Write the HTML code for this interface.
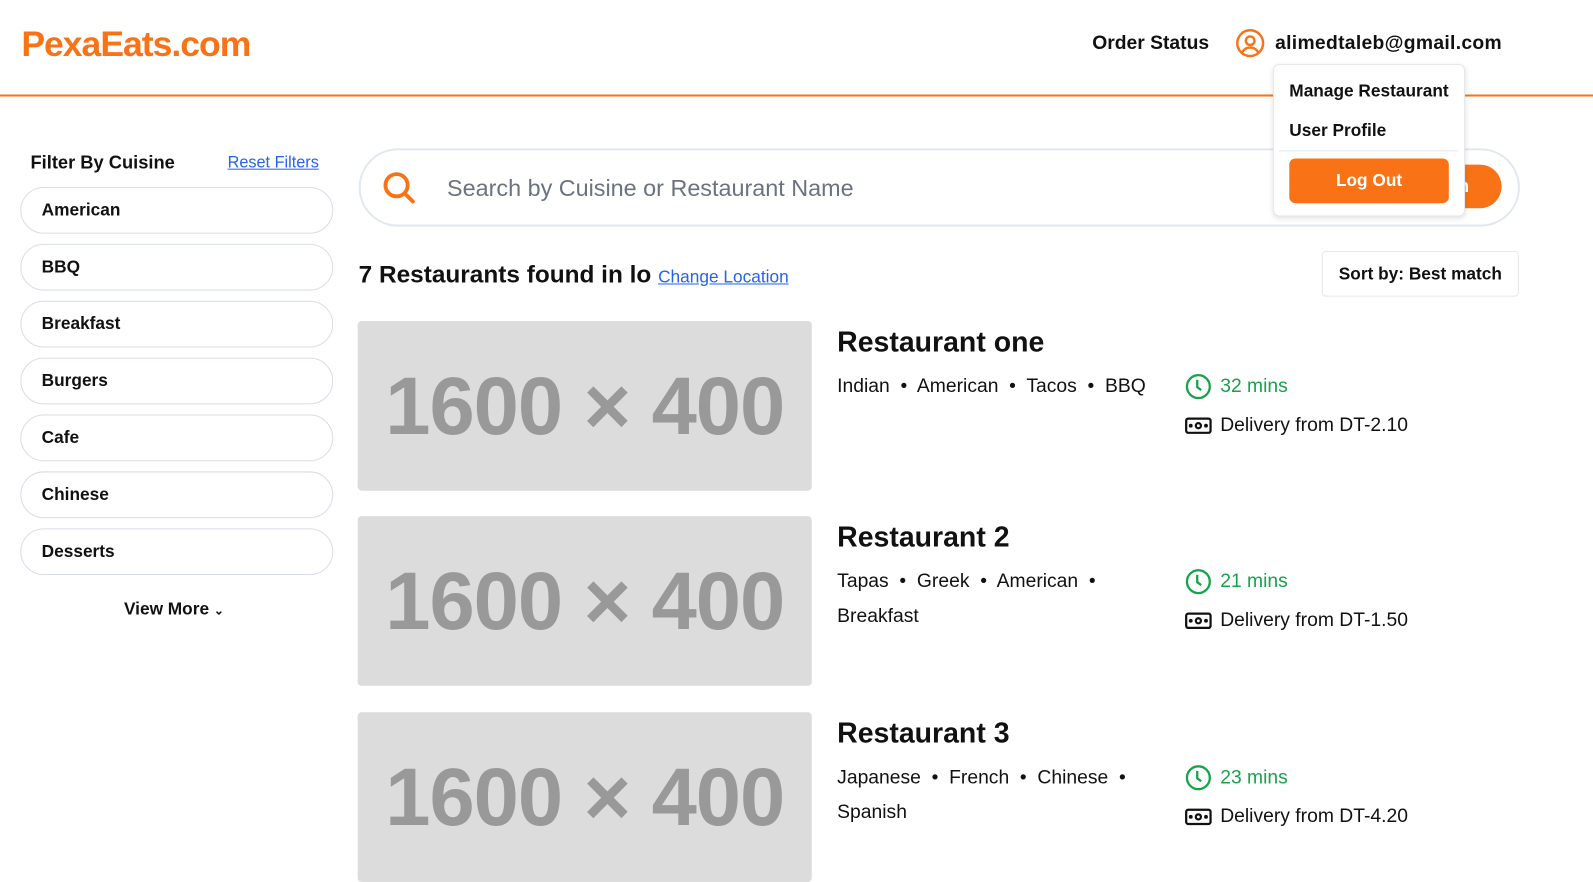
<!DOCTYPE html><html><head><style>
body{margin:0;width:1593px;height:839px;overflow:hidden;font-family:"Liberation Sans",sans-serif;background:#fff;color:#111;position:relative}
#w{position:absolute;left:0;top:0;width:1568px;height:826px;transform:scale(1.016);transform-origin:0 0}
.a{position:absolute}
.pill{position:absolute;left:20px;width:306px;height:44px;border:1px solid #d8dde6;border-radius:24px;font-size:17px;font-weight:600;line-height:44px}
.pill span{margin-left:20px}
.img{position:absolute;left:352px;width:447px;height:167px;background:#dcdcdc;border-radius:4px;overflow:hidden;color:#999;font-size:80px;font-weight:bold;text-align:center;line-height:167px;letter-spacing:-1px}
.t{position:absolute;left:824px;font-size:28px;font-weight:bold}
.c{position:absolute;left:824px;font-size:19px;width:320px;line-height:34px}
.m{position:absolute;left:1166px;font-size:19px;display:flex;align-items:center;gap:8px}
</style></head><body><div id="w">
<div class="a" style="left:21px;top:24px;font-size:35px;font-weight:bold;color:#f97316;letter-spacing:-1px">PexaEats.com</div>
<div class="a" style="left:1075px;top:32px;font-size:19px;font-weight:bold">Order Status</div>
<svg class="a" style="left:1216px;top:28px" width="29" height="29" viewBox="0 0 24 24" fill="none" stroke="#f97316" stroke-width="2"><circle cx="12" cy="12" r="10.5"/><circle cx="12" cy="10" r="3.5"/><path d="M5.5 19.5c1.5-3 4-4 6.5-4s5 1 6.5 4"/></svg>
<div class="a" style="left:1255px;top:32px;font-size:19px;font-weight:bold;letter-spacing:.3px">alimedtaleb@gmail.com</div>
<div class="a" style="left:0;top:93px;width:1568px;height:2px;background:#f97316"></div>
<div class="a" style="left:30px;top:150px;font-size:18px;font-weight:600">Filter By Cuisine</div>
<div class="a" style="left:224px;top:152px;font-size:16px;color:#2563eb;text-decoration:underline">Reset Filters</div>
<div class="pill" style="top:184px"><span>American</span></div>
<div class="pill" style="top:240px"><span>BBQ</span></div>
<div class="pill" style="top:296px"><span>Breakfast</span></div>
<div class="pill" style="top:352px"><span>Burgers</span></div>
<div class="pill" style="top:408px"><span>Cafe</span></div>
<div class="pill" style="top:464px"><span>Chinese</span></div>
<div class="pill" style="top:520px"><span>Desserts</span></div>
<div class="a" style="left:122px;top:590px;font-size:17px;font-weight:600">View More <span style="font-size:12px">&#8964;</span></div>
<div class="a" style="left:353px;top:146px;width:1139px;height:73px;border:2px solid #e2e8f0;border-radius:40px"></div>
<svg class="a" style="left:375px;top:167px" width="35" height="35" viewBox="0 0 24 24" fill="none" stroke="#f97316" stroke-width="2.6" stroke-linecap="round"><circle cx="10.5" cy="10.5" r="7.5"/><path d="M16 16l5.5 5.5"/></svg>
<div class="a" style="left:440px;top:172px;font-size:23px;color:#6b7280">Search by Cuisine or Restaurant Name</div>
<div class="a" style="left:1380px;top:162px;width:98px;height:43px;background:#f97316;border-radius:22px;color:#fff;font-size:18px;font-weight:bold;line-height:43px;text-align:right"><span style="margin-right:32px">ch</span></div>
<div class="a" style="left:1253px;top:63px;width:187px;height:148px;background:#fff;border:1px solid #e5e7eb;border-radius:6px;box-shadow:0 2px 6px rgba(0,0,0,.12)">
<div class="a" style="left:15px;top:16px;font-size:17px;font-weight:600">Manage Restaurant</div>
<div class="a" style="left:15px;top:55px;font-size:17px;font-weight:600">User Profile</div>
<div class="a" style="left:5px;top:84px;width:176px;height:1px;background:#e5e7eb"></div>
<div class="a" style="left:15px;top:92px;width:157px;height:44px;background:#f97316;border-radius:6px;color:#fff;font-size:17px;font-weight:bold;text-align:center;line-height:44px">Log Out</div>
</div>
<div class="a" style="left:353px;top:257px;font-size:24px;font-weight:bold">7 Restaurants found in lo <span style="font-size:17px;font-weight:normal;color:#2563eb;text-decoration:underline">Change Location</span></div>
<div class="a" style="left:1301px;top:247px;width:192px;height:43px;border:1px solid #e5e7eb;border-radius:4px;font-size:17px;font-weight:600;line-height:43px;text-align:center">Sort by: Best match</div>

<div class="img" style="top:316px">1600 × 400</div>
<div class="t" style="top:321px">Restaurant one</div>
<div class="c" style="top:364px">Indian &nbsp;•&nbsp; American &nbsp;•&nbsp; Tacos &nbsp;•&nbsp; BBQ</div>
<div class="img" style="top:508px">1600 × 400</div>
<div class="t" style="top:513px">Restaurant 2</div>
<div class="c" style="top:556px">Tapas &nbsp;•&nbsp; Greek &nbsp;•&nbsp; American &nbsp;•<br>Breakfast</div>
<div class="img" style="top:701px">1600 × 400</div>
<div class="t" style="top:706px">Restaurant 3</div>
<div class="c" style="top:749px">Japanese &nbsp;•&nbsp; French &nbsp;•&nbsp; Chinese &nbsp;•<br>Spanish</div>

<div class="m" style="top:367px;color:#16a34a"><svg width="27" height="27" viewBox="0 0 24 24" fill="none" stroke="#16a34a" stroke-width="2"><circle cx="12" cy="12" r="10"/><path d="M11 6v6.5l3.5 2.5"/></svg>32 mins</div>
<div class="m" style="top:408px"><svg width="27" height="20" viewBox="0 0 27 20" fill="none" stroke="#111" stroke-width="2.2"><rect x="1.5" y="3" width="24" height="14" rx="2"/><circle cx="13.5" cy="10" r="2.5"/><circle cx="6" cy="10" r=".8" fill="#111"/><circle cx="21" cy="10" r=".8" fill="#111"/></svg>Delivery from DT-2.10</div>
<div class="m" style="top:559px;color:#16a34a"><svg width="27" height="27" viewBox="0 0 24 24" fill="none" stroke="#16a34a" stroke-width="2"><circle cx="12" cy="12" r="10"/><path d="M11 6v6.5l3.5 2.5"/></svg>21 mins</div>
<div class="m" style="top:600px"><svg width="27" height="20" viewBox="0 0 27 20" fill="none" stroke="#111" stroke-width="2.2"><rect x="1.5" y="3" width="24" height="14" rx="2"/><circle cx="13.5" cy="10" r="2.5"/><circle cx="6" cy="10" r=".8" fill="#111"/><circle cx="21" cy="10" r=".8" fill="#111"/></svg>Delivery from DT-1.50</div>
<div class="m" style="top:752px;color:#16a34a"><svg width="27" height="27" viewBox="0 0 24 24" fill="none" stroke="#16a34a" stroke-width="2"><circle cx="12" cy="12" r="10"/><path d="M11 6v6.5l3.5 2.5"/></svg>23 mins</div>
<div class="m" style="top:793px"><svg width="27" height="20" viewBox="0 0 27 20" fill="none" stroke="#111" stroke-width="2.2"><rect x="1.5" y="3" width="24" height="14" rx="2"/><circle cx="13.5" cy="10" r="2.5"/><circle cx="6" cy="10" r=".8" fill="#111"/><circle cx="21" cy="10" r=".8" fill="#111"/></svg>Delivery from DT-4.20</div>
</div></body></html>
